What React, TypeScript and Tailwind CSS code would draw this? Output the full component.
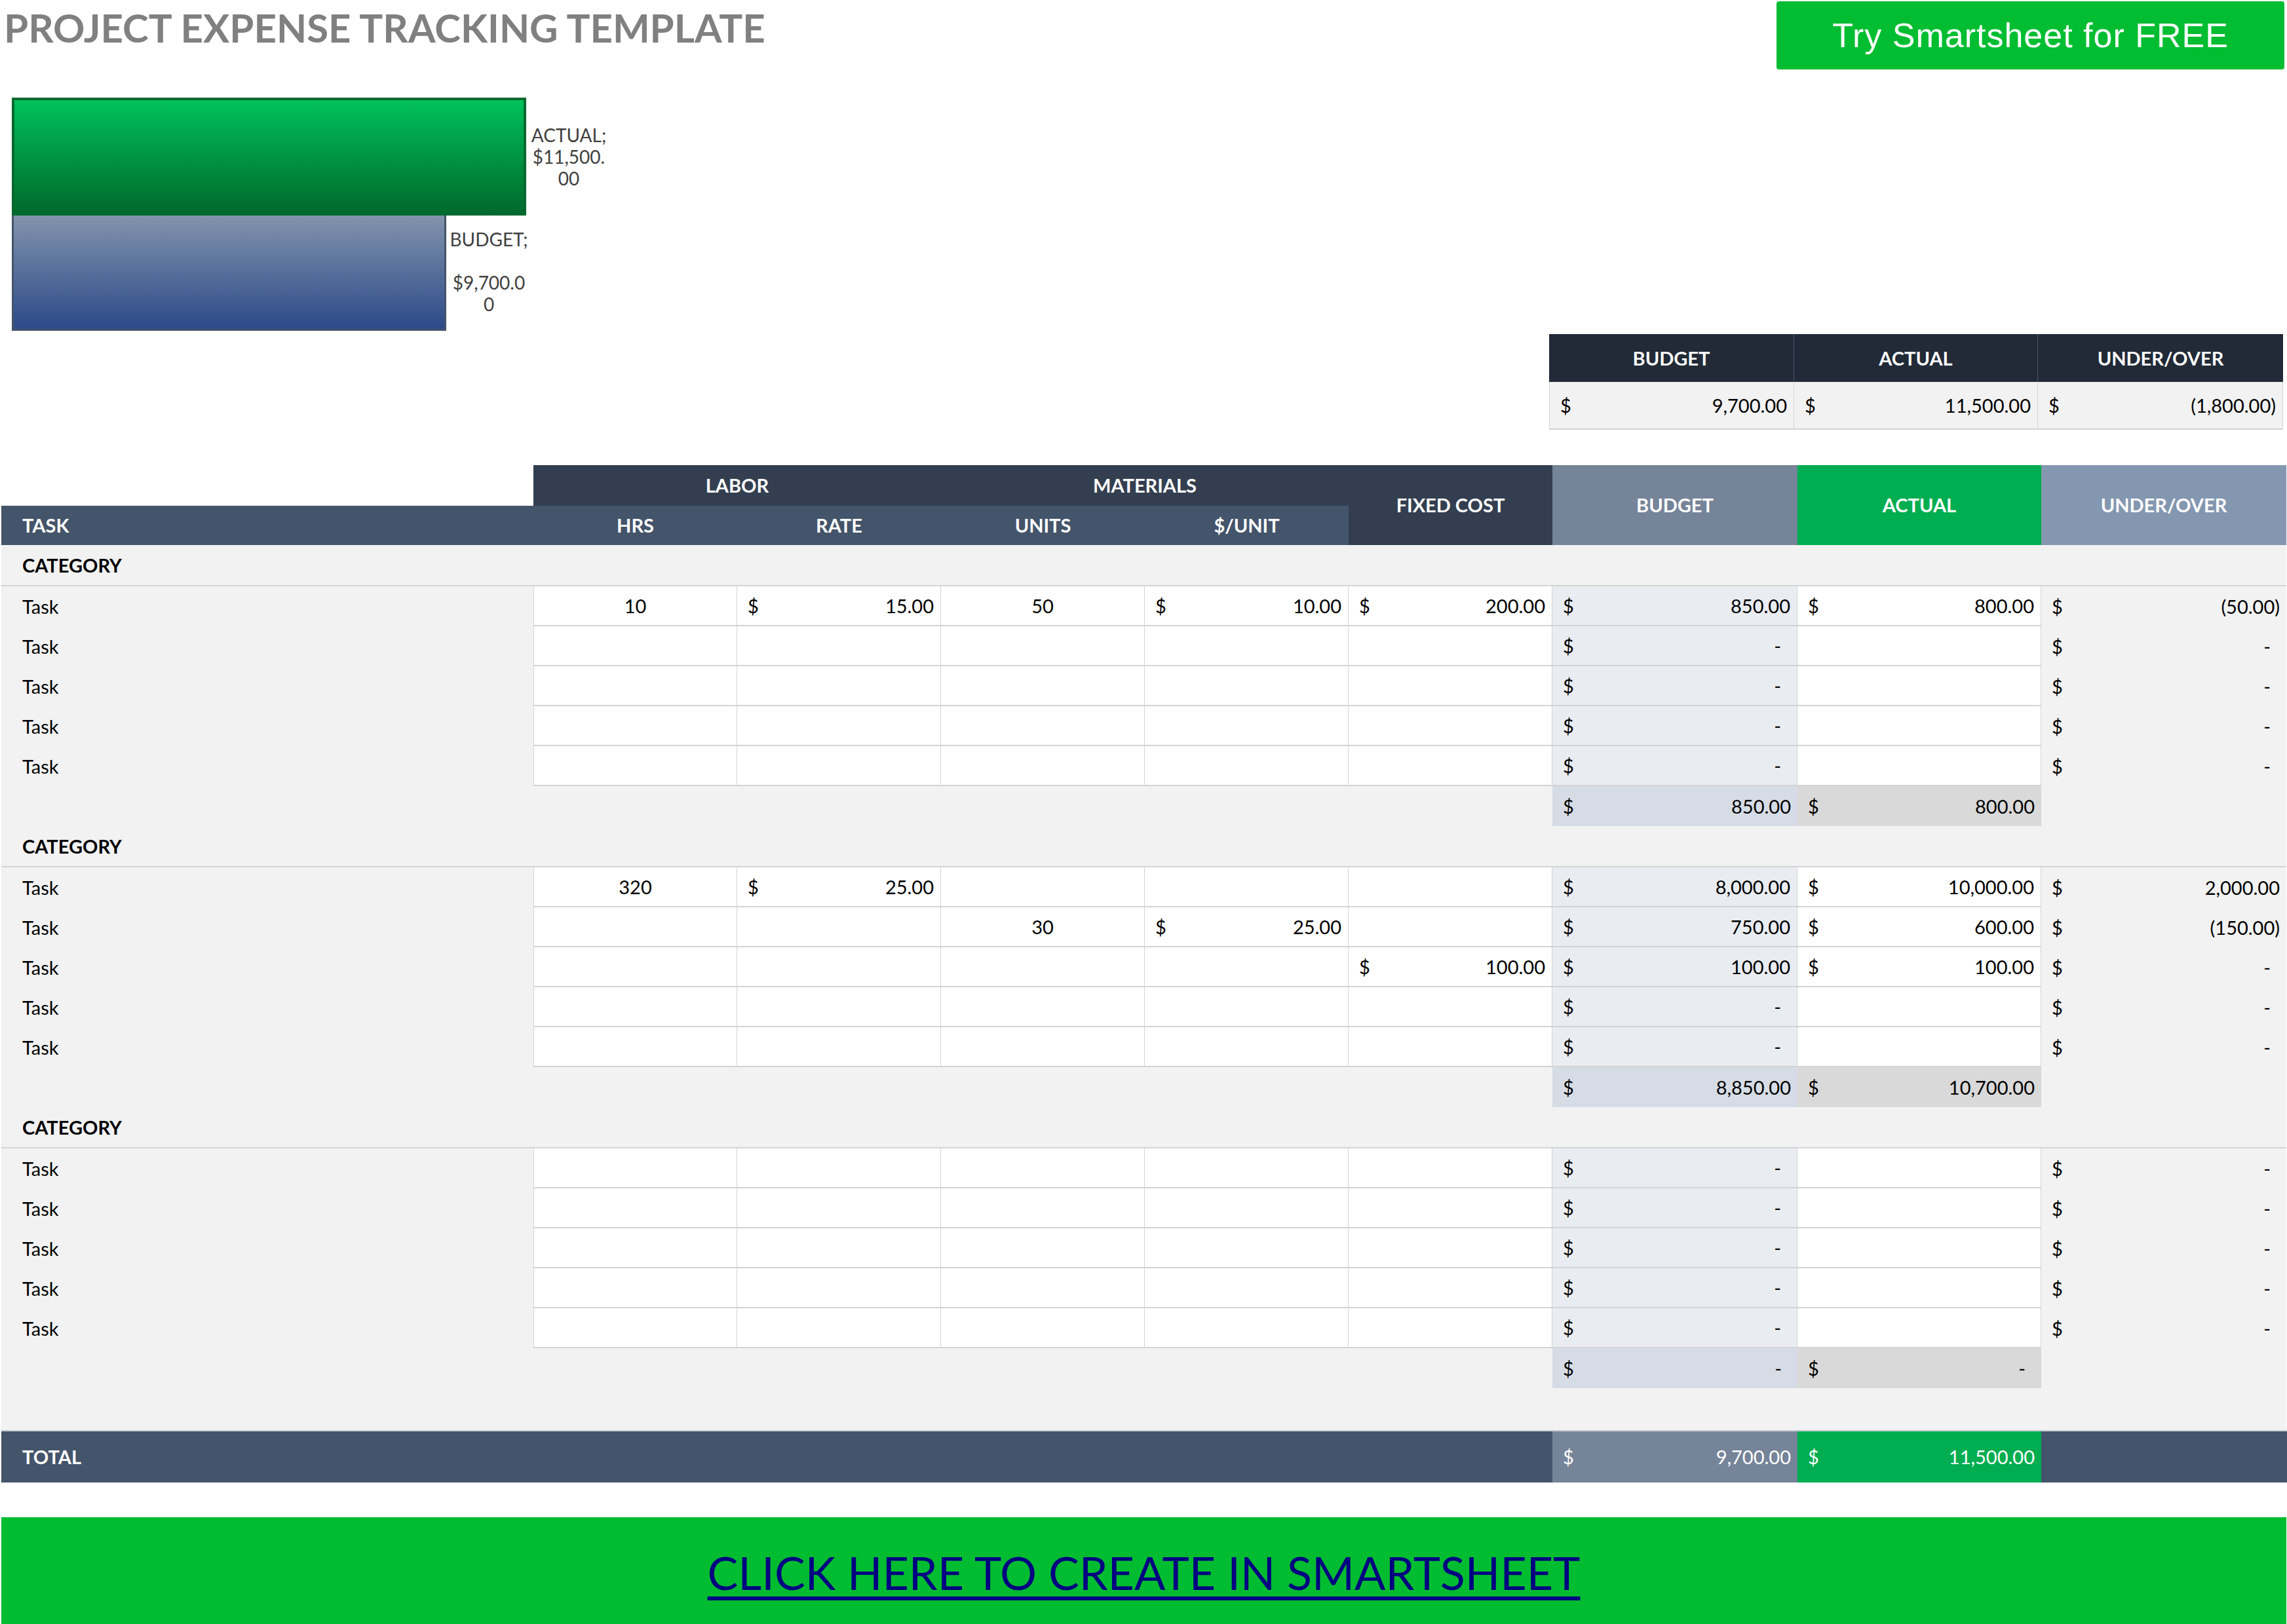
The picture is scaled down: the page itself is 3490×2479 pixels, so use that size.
import React from "react";

const COLS = "grid grid-cols-[812px_311px_311px_311px_311px_311px_374px_372px_374px]";
const font = { fontFamily: "Lato, 'Open Sans', sans-serif" };

type R = { hrs?: string; rate?: string; units?: string; unit?: string; fixed?: string; budget: string; actual?: string; under: string };

function Money({ v, className = "" }: { v?: string; className?: string }) {
  return (
    <div className={`flex h-full items-center justify-between pl-[16px] pr-[10px] ${className}`}>
      {v !== undefined ? (
        <>
          <span>$</span>
          <span className={v === "-" ? "pr-[14px]" : ""}>{v}</span>
        </>
      ) : null}
    </div>
  );
}

const W = "bg-white border-r border-b-2 border-[#d4d4d4] h-full";

function TaskRow({ r }: { r: R }) {
  return (
    <div className={`${COLS} h-[61px] text-[29px] text-black`}>
      <div className="flex items-center pl-[32px]">Task</div>
      <div className={`${W} border-l flex items-center justify-center`}>{r.hrs}</div>
      <div className={W}>{r.rate !== undefined && <Money v={r.rate} />}</div>
      <div className={`${W} flex items-center justify-center`}>{r.units}</div>
      <div className={W}>{r.unit !== undefined && <Money v={r.unit} />}</div>
      <div className={W}>{r.fixed !== undefined && <Money v={r.fixed} />}</div>
      <div className="h-full bg-[#e9ecf1] border-r border-b-2 border-[#d4d4d4]"><Money v={r.budget} /></div>
      <div className={W}>{r.actual !== undefined && <Money v={r.actual} />}</div>
      <div className="h-full"><Money v={r.under} /></div>
    </div>
  );
}

function Section({ rows, sb, sa }: { rows: R[]; sb: string; sa: string }) {
  return (
    <>
      <div className="h-[61px] flex items-center pl-[32px] text-[29px] font-bold text-black">CATEGORY</div>
      <div className="border-t-2 border-[#d4d4d4]">
        {rows.map((r, i) => <TaskRow key={i} r={r} />)}
      </div>
      <div className={`${COLS} h-[61px] text-[29px]`}>
        <div className="col-span-6" />
        <div className="bg-[#d6dce5]"><Money v={sb} /></div>
        <div className="bg-[#d9d9d9]"><Money v={sa} /></div>
        <div />
      </div>
    </>
  );
}

const empty: R = { budget: "-", under: "-" };

export default function App() {
  return (
    <div className="w-[3490px] h-[2479px] bg-white relative text-[#000]" style={font}>
      {/* top */}
      <div className="flex justify-between items-start">
        <div className="pl-[6px] pt-[12px] text-[60px] font-bold text-[#808080] leading-none">PROJECT EXPENSE TRACKING TEMPLATE</div>
        <div
          className="mt-[2px] mr-[4px] w-[775px] h-[104px] bg-[#00bd31] rounded-[4px] flex items-center justify-center text-white text-[52px] tracking-[1px]"
          style={{ fontFamily: "'Liberation Sans', Arial, sans-serif" }}
        >
          Try Smartsheet for FREE
        </div>
      </div>

      {/* chart */}
      <div className="mt-[43px] ml-[18px] flex flex-col text-[28px] text-[#404040] leading-[33px]">
        <div className="flex items-center">
          <div className="w-[785px] h-[180px] border-[4px] border-[#00692f] bg-gradient-to-b from-[#00c25b] to-[#006a2d]" />
          <div className="w-[130px] text-center">ACTUAL;<br />$11,500.<br />00</div>
        </div>
        <div className="flex items-start">
          <div className="w-[663px] h-[176px] border-[3px] border-t-0 border-[#44546a] bg-gradient-to-b from-[#8393ab] to-[#2c4a88]" />
          <div className="w-[130px] text-center pt-[20px]">BUDGET;<br /><br />$9,700.0<br />0</div>
        </div>
      </div>

      {/* summary */}
      <div className="flex justify-end pr-[6px] mt-[5px]">
        <div className="grid grid-cols-[374px_372px_374px] text-[29px]">
          <div className="h-[73px] bg-[#222a37] text-white font-bold flex items-center justify-center border-r border-[#4a5566]">BUDGET</div>
          <div className="h-[73px] bg-[#222a37] text-white font-bold flex items-center justify-center border-r border-[#4a5566]">ACTUAL</div>
          <div className="h-[73px] bg-[#222a37] text-white font-bold flex items-center justify-center">UNDER/OVER</div>
          <div className="h-[73px] bg-[#f2f2f2] border-l border-b-2 border-r border-[#d4d4d4]"><Money v="9,700.00" /></div>
          <div className="h-[73px] bg-[#f2f2f2] border-b-2 border-r border-[#d4d4d4]"><Money v="11,500.00" /></div>
          <div className="h-[73px] bg-[#f2f2f2] border-b-2 border-r border-[#d4d4d4]"><Money v="(1,800.00)" /></div>
        </div>
      </div>

      {/* main table */}
      <div className="mt-[54px] pl-[2px]">
        <div className={`${COLS} text-[29px] text-white font-bold`}>
          <div className="flex flex-col">
            <div className="h-[62px] bg-white" />
            <div className="h-[60px] bg-[#44546a] flex items-center pl-[32px]">TASK</div>
          </div>
          <div className="col-span-2 flex flex-col">
            <div className="h-[62px] bg-[#333f50] flex items-center justify-center">LABOR</div>
            <div className="h-[60px] bg-[#44546a] grid grid-cols-2">
              <div className="flex items-center justify-center">HRS</div>
              <div className="flex items-center justify-center">RATE</div>
            </div>
          </div>
          <div className="col-span-2 flex flex-col">
            <div className="h-[62px] bg-[#333f50] flex items-center justify-center">MATERIALS</div>
            <div className="h-[60px] bg-[#44546a] grid grid-cols-2">
              <div className="flex items-center justify-center">UNITS</div>
              <div className="flex items-center justify-center">$/UNIT</div>
            </div>
          </div>
          <div className="bg-[#333f50] flex items-center justify-center">FIXED COST</div>
          <div className="bg-[#768499] flex items-center justify-center">BUDGET</div>
          <div className="bg-[#00ad50] flex items-center justify-center">ACTUAL</div>
          <div className="bg-[#8497b0] flex items-center justify-center">UNDER/OVER</div>
        </div>

        <div className="bg-[#f2f2f2] w-[3487px]">
          <Section
            rows={[
              { hrs: "10", rate: "15.00", units: "50", unit: "10.00", fixed: "200.00", budget: "850.00", actual: "800.00", under: "(50.00)" },
              empty, empty, empty, empty,
            ]}
            sb="850.00"
            sa="800.00"
          />
          <Section
            rows={[
              { hrs: "320", rate: "25.00", budget: "8,000.00", actual: "10,000.00", under: "2,000.00" },
              { units: "30", unit: "25.00", budget: "750.00", actual: "600.00", under: "(150.00)" },
              { fixed: "100.00", budget: "100.00", actual: "100.00", under: "-" },
              empty, empty,
            ]}
            sb="8,850.00"
            sa="10,700.00"
          />
          <Section rows={[empty, empty, empty, empty, empty]} sb="-" sa="-" />
          <div className="h-[64px]" />
        </div>

        <div className={`${COLS} h-[80px] text-[29px] text-white bg-[#44546a] border-t-2 border-[#c8ccd2]`}>
          <div className="col-span-6 flex items-center pl-[32px] font-bold">TOTAL</div>
          <div className="bg-[#768499]"><Money v="9,700.00" /></div>
          <div className="bg-[#00ad50]"><Money v="11,500.00" /></div>
          <div />
        </div>

        <div className="mt-[53px] w-[3487px] h-[168px] bg-[#00bc31] flex items-center justify-center">
          <span className="text-[70px] text-[#000080] underline decoration-[6px] underline-offset-[10px]">CLICK HERE TO CREATE IN SMARTSHEET</span>
        </div>
      </div>
    </div>
  );
}
